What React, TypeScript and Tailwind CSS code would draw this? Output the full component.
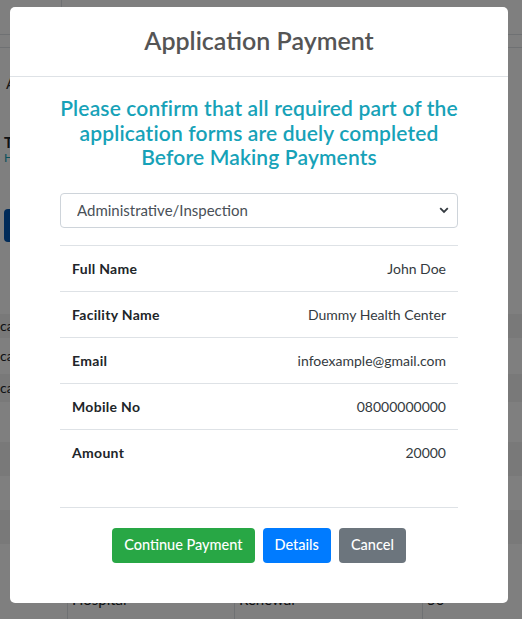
import React from "react";

const rows = [
  { label: "Full Name", value: "John Doe" },
  { label: "Facility Name", value: "Dummy Health Center" },
  { label: "Email", value: "infoexample@gmail.com" },
  { label: "Mobile No", value: "08000000000" },
  { label: "Amount", value: "20000" },
];

const font = { fontFamily: "Lato, 'Open Sans', sans-serif" };

export default function App() {
  return (
    <div className="relative w-[522px] h-[619px] overflow-hidden bg-white text-[#212529]" style={font}>
      {/* page behind the modal */}
      <div className="flex flex-col h-full">
        <div className="h-[35px] flex border-b border-[#dee2e6]">
          <div className="w-[62px] border-r border-[#dee2e6]" />
        </div>
        <div className="h-[13px] border-b border-[#dee2e6]" />
        <div className="px-[6px] pt-[24px] text-[15px] text-[#333]">A</div>
        <div className="px-[4px] pt-[38px] text-[15px] font-bold leading-[18px]">Tem</div>
        <div className="px-[4px] text-[12px] text-[#17a2b8] leading-[14px]">Hospita</div>
        <div className="pl-[4px] pt-[44px]">
          <div className="w-[40px] h-[33px] rounded bg-[#0056b3]" />
        </div>
        <div className="mt-[72px] flex flex-col text-[14px]">
          <div className="h-[24px] bg-[#f2f2f2] flex items-center">ca</div>
          <div className="h-[36px] flex items-center">ca</div>
          <div className="h-[28px] bg-[#f2f2f2] flex items-center">ca</div>
          <div className="h-[40px]" />
          <div className="h-[34px] bg-[#f2f2f2]" />
          <div className="h-[34px]" />
          <div className="h-[34px] bg-[#f2f2f2]" />
        </div>
        <div className="flex flex-1 text-[15px] pt-[45px]">
          <div className="w-[68px] border-r border-[#dee2e6]" />
          <div className="w-[167px] border-r border-[#dee2e6] pl-[4px] leading-[20px]">Hospital</div>
          <div className="w-[188px] border-r border-[#dee2e6] pl-[4px] leading-[20px]">Renewal</div>
          <div className="pl-[4px] leading-[20px]">50</div>
        </div>
      </div>

      {/* overlay */}
      <div className="absolute inset-0 bg-black/50" />

      {/* modal */}
      <div className="absolute left-[10px] top-[7px] w-[498px] h-[596px] bg-white rounded-[5px] flex flex-col">
        <div className="h-[70px] border-b border-[#dee2e6] flex items-center justify-center">
          <h2 className="text-[25px] font-semibold text-[#555555] leading-none -mt-[2px]">Application Payment</h2>
        </div>
        <div className="px-[50px] pt-[19px] flex flex-col">
          <h3 className="text-center text-[21px] tracking-[0.15px] leading-[24.5px] font-semibold text-[#17a2b8]">
            Please confirm that all required part of the application forms are duely completed Before Making Payments
          </h3>
          <div className="relative mt-[23px]">
            <select className="w-full h-[35px] appearance-none border border-[#ced4da] rounded-[4px] pl-[16px] pr-[30px] text-[15px] text-[#495057] bg-white">
              <option>Administrative/Inspection</option>
            </select>
            <svg className="absolute right-[9px] top-[14px] pointer-events-none" width="10" height="7" viewBox="0 0 10 7">
              <path d="M1.2 1.2 L5 5 L8.8 1.2" fill="none" stroke="#343a40" strokeWidth="1.8" />
            </svg>
          </div>
          <div className="mt-[17px] flex flex-col">
            {rows.map(r => (
              <div key={r.label} className="h-[46px] border-t border-[#dee2e6] flex items-center justify-between px-[12px]">
                <span className="text-[14px] tracking-[0.3px] font-bold text-[#212529]">{r.label}</span>
                <span className="text-[14px] text-[#343a40]">{r.value}</span>
              </div>
            ))}
          </div>
          <div className="mt-[32px] border-t border-[#dee2e6]" />
          <div className="mt-[20px] flex justify-center gap-[8px]">
            <button className="h-[35px] px-[12px] rounded-[4px] bg-[#28a745] text-white text-[14.5px] font-medium">Continue Payment</button>
            <button className="h-[35px] px-[12px] rounded-[4px] bg-[#007bff] text-white text-[14.5px] font-medium">Details</button>
            <button className="h-[35px] px-[12px] rounded-[4px] bg-[#6c757d] text-white text-[14.5px] font-medium">Cancel</button>
          </div>
        </div>
      </div>
    </div>
  );
}
